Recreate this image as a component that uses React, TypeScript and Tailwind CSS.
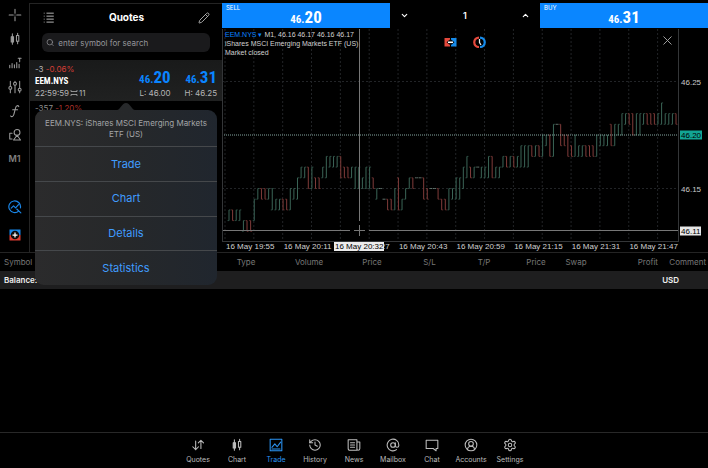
import { useState } from 'react';
import type { ReactNode } from 'react';
import { AtSign, ChevronDown, ChevronUp, CircleUserRound, History, Pencil, Search, Settings, X } from 'lucide-react';

// [low, high, direction] in cents above 46.00, one bar per minute
type Bar = [number, number, 'u' | 'd' | 'f'];

const BARS: Bar[] = [
  [12, 13, 'u'], [12, 13, 'd'], [12, 13, 'u'], [12, 13, 'u'], [11, 12, 'u'], [11, 12, 'd'], [11, 12, 'd'], [12, 14, 'u'],
  [14, 15, 'u'], [14, 15, 'd'], [14, 15, 'd'], [14, 15, 'u'], [13, 15, 'u'], [13, 14, 'u'], [13, 14, 'u'], [13, 14, 'd'],
  [13, 14, 'd'], [13, 15, 'u'], [14, 15, 'u'], [14, 16, 'u'], [16, 17, 'u'], [16, 17, 'u'], [15, 17, 'd'], [15, 17, 'u'],
  [15, 16, 'd'], [15, 16, 'd'], [16, 17, 'u'], [16, 18, 'u'], [17, 18, 'u'], [17, 18, 'u'], [17, 18, 'u'], [16, 18, 'd'],
  [16, 17, 'd'], [16, 17, 'd'], [16, 17, 'u'], [15, 17, 'u'], [15, 17, 'u'], [15, 16, 'u'], [15, 17, 'u'], [15, 17, 'u'],
  [15, 16, 'd'], [14, 15, 'u'], [15, 15, 'f'], [14, 14, 'f'], [13, 14, 'd'], [13, 14, 'd'], [13, 15, 'u'], [13, 16, 'd'],
  [13, 14, 'u'], [14, 15, 'u'], [15, 16, 'u'], [15, 16, 'd'], [16, 16, 'f'], [16, 16, 'f'], [14, 16, 'd'], [14, 15, 'd'],
  [15, 15, 'f'], [15, 15, 'f'], [14, 15, 'd'], [13, 14, 'd'], [13, 14, 'd'], [13, 15, 'u'], [14, 15, 'u'], [14, 16, 'u'],
  [14, 16, 'u'], [15, 17, 'u'], [16, 18, 'u'], [16, 17, 'd'], [16, 17, 'u'], [17, 17, 'f'], [16, 17, 'u'], [16, 17, 'u'],
  [16, 18, 'u'], [16, 18, 'd'], [16, 17, 'u'], [16, 17, 'u'], [17, 18, 'u'], [17, 18, 'd'], [17, 18, 'u'], [17, 18, 'd'],
  [17, 18, 'u'], [17, 19, 'u'], [17, 19, 'u'], [17, 19, 'u'], [18, 19, 'd'], [18, 19, 'u'], [18, 19, 'd'], [18, 20, 'u'],
  [19, 20, 'u'], [18, 20, 'd'], [18, 21, 'u'], [21, 21, 'f'], [19, 21, 'd'], [19, 20, 'd'], [18, 20, 'd'], [18, 19, 'd'],
  [18, 20, 'u'], [18, 19, 'u'], [18, 19, 'u'], [18, 19, 'd'], [18, 19, 'd'], [18, 19, 'd'], [18, 20, 'u'], [19, 20, 'u'],
  [19, 20, 'u'], [19, 20, 'u'], [19, 21, 'd'], [19, 21, 'u'], [20, 21, 'u'], [20, 22, 'u'], [21, 22, 'u'], [21, 22, 'd'],
  [20, 22, 'd'], [20, 22, 'u'], [20, 22, 'u'], [21, 22, 'u'], [21, 22, 'd'], [21, 22, 'd'], [21, 22, 'd'], [21, 22, 'u'],
  [21, 23, 'u'], [21, 22, 'u'], [21, 22, 'u'], [21, 22, 'u'], [21, 22, 'd'],
];

const PLOT_W = 457;
const PLOT_H = 213;
const priceY = (cents: number) => 52.5 + (25 - cents) * 10.7;
const barX = (i: number) => 7 + i * 3.605;

const GRID_X = Array.from({ length: 16 }, (_, i) => 3 + i * 28.84);
const TIMES = ['19:55', '20:11', '20:27', '20:43', '20:59', '21:15', '21:31', '21:47'];
const BAR_COLORS = { u: '#3b6557', d: '#803c3a', f: '#5e7069' };

const PriceChart = () => (
  <svg
    viewBox={`0 0 ${PLOT_W} ${PLOT_H}`}
    preserveAspectRatio="none"
    className="block h-[213px] w-full"
    role="img"
    aria-label="EEM.NYS one minute bars"
  >
    <g stroke="#222427" strokeDasharray="2 2">
      {GRID_X.map((x) => (
        <line key={x} x1={x} x2={x} y1="0" y2={PLOT_H} />
      ))}
      <line x1="0" x2={PLOT_W} y1={priceY(25)} y2={priceY(25)} />
      <line x1="0" x2={PLOT_W} y1={priceY(15)} y2={priceY(15)} />
    </g>
    {BARS.map(([low, high, dir], i) => {
      const x = barX(i);
      const top = priceY(high);
      const bottom = priceY(low);
      const open = dir === 'u' ? bottom : top;
      const close = dir === 'u' ? top : bottom;
      return (
        <g key={i} stroke={BAR_COLORS[dir]} fill="none">
          <path d={`M${x} ${top}V${bottom}`} />
          <path d={`M${x - 1.5} ${open}H${x}M${x} ${close}H${x + 1.5}`} strokeOpacity={dir === 'f' ? 1 : 0.7} />
        </g>
      );
    })}
    <line x1="0" x2={PLOT_W} y1={priceY(20)} y2={priceY(20)} stroke="#84a5a0" strokeDasharray="1 1" />
    {/* crosshair */}
    <path
      d="M137.5 0V192M137.5 196V207M0 201.5H128M132 201.5H143M147 201.5H457"
      stroke="#777"
      strokeWidth="1"
      fill="none"
    />
    <path d="M0.5 0V213M0 212.5H457M456.5 0V213" stroke="#343638" fill="none" />
  </svg>
);

const Glyph = ({ children, className = 'size-[14px]' }: { children: ReactNode; className?: string }) => (
  <svg
    viewBox="0 0 24 24"
    className={className}
    fill="none"
    stroke="currentColor"
    strokeWidth="1.8"
    strokeLinecap="round"
    strokeLinejoin="round"
    aria-hidden="true"
  >
    {children}
  </svg>
);

const CandlesIcon = () => (
  <Glyph>
    <path d="M7.500 3v18M16.500 2v4M16.500 16v4" />
    <path d="M5.500 8h4v9h-4z" fill="currentColor" />
    <path d="M14.500 6h4v10h-4z" />
  </Glyph>
);

const TOOLS: { label: string; icon: ReactNode }[] = [
  { label: 'Crosshair', icon: <Glyph><path d="M12 2v7M12 15v7M2 12h7M15 12h7M12 12h.01" /></Glyph> },
  { label: 'Chart type', icon: <CandlesIcon /> },
  {
    label: 'Volumes',
    icon: <Glyph><path d="M3 20v-4M7 20v-7M11 20v-5M15 20v-9M19 20v-6M17.500 4h5M20 4v6" /></Glyph>,
  },
  {
    label: 'Indicators',
    icon: (
      <Glyph>
        <path d="M4 2v9M4 16v6M12 2v2M12 9v13M20 2v12M20 19v3" />
        <circle cx="4" cy="13.500" r="2.500" />
        <circle cx="12" cy="6.500" r="2.500" />
        <circle cx="20" cy="16.500" r="2.500" />
      </Glyph>
    ),
  },
  {
    label: 'Functions',
    icon: <Glyph><path d="M18.500 4.500c-1-2.500-4.500-2.500-5.500 2L10 18c-.8 4-4 4.500-5.500 2.500M8 10h8.500" /></Glyph>,
  },
  {
    label: 'Objects',
    icon: (
      <Glyph>
        <circle cx="15.500" cy="7.500" r="5" />
        <path d="M7 9H3v10h4M15.500 12.500l6 8h-12z" />
      </Glyph>
    ),
  },
];

const NAV_ITEMS: { label: string; icon: ReactNode }[] = [
  { label: 'Quotes', icon: <Glyph><path d="M8 5v15M3 15l5 5 5-5M17 18V4M12.500 8.500L17 4l4.500 4.500" /></Glyph> },
  { label: 'Chart', icon: <CandlesIcon /> },
  {
    label: 'Trade',
    icon: (
      <Glyph>
        <path d="M2 2h20v20H2z" />
        <path d="M5 16l5-6 4 5 6-8M5 19h14" />
      </Glyph>
    ),
  },
  { label: 'History', icon: <History className="size-[14px]" strokeWidth={1.8} /> },
  {
    label: 'News',
    icon: <Glyph><path d="M2 3h15v18H5c-2 0-3-1-3-3zM17 7h5v11c0 2-1 3-3 3s-2-1-2-3M6 8h7M6 12h7M6 16h7" /></Glyph>,
  },
  { label: 'Mailbox', icon: <AtSign className="size-[14px]" strokeWidth={1.8} /> },
  { label: 'Chat', icon: <Glyph><path d="M2 4h20v14h-3v4l-5-4H2z" /></Glyph> },
  { label: 'Accounts', icon: <CircleUserRound className="size-[14px]" strokeWidth={1.8} /> },
  { label: 'Settings', icon: <Settings className="size-[14px]" strokeWidth={1.8} /> },
];

const ToolRail = () => (
  <aside className="flex w-[29px] shrink-0 flex-col items-center text-[#9c9c9c]">
    {TOOLS.map((tool) => (
      <button key={tool.label} type="button" aria-label={tool.label} className="flex h-6 w-full items-center justify-center">
        {tool.icon}
      </button>
    ))}
    <button type="button" className="h-6 w-full text-[9px] font-semibold text-[#808080]">M1</button>
    <button type="button" aria-label="Analysis" className="mt-[22px] flex h-7 w-full items-center justify-center text-[#1a86e8]">
      <Glyph>
        <path d="M18.600 18.600A10 10 0 1 1 21.300 13.500M15 15.500l7 6.500M5.500 14l4-4 3.500 3.500 5-5.500" strokeWidth="2" />
      </Glyph>
    </button>
    <button type="button" aria-label="New order" className="flex h-7 w-full items-center justify-center">
      <svg viewBox="0 0 24 24" className="size-[12px]" aria-hidden="true">
        <path d="M1 1h22v11H1z" fill="#1687e8" />
        <path d="M1 12h22v11H1z" fill="#dc3d32" />
        <circle cx="12" cy="12" r="8.500" fill="#0b0b0b" />
        <path d="M12 7v10M7 12h10" stroke="#fff" strokeWidth="2.500" />
      </svg>
    </button>
  </aside>
);

const Price = ({ small, big }: { small: string; big: string }) => (
  <span className="font-['Liberation_Sans_Narrow','Roboto_Condensed','Open_Sans_Condensed','Liberation_Sans',sans-serif] text-[11px] leading-[14px] font-bold">
    {small}
    <span className="text-[17px]">{big}</span>
  </span>
);

const QuoteMenu = () => (
  <div
    role="menu"
    className="absolute top-[106px] right-[5px] left-[5px] z-10 rounded-[9px] bg-linear-to-r from-[#2b2b2c] via-[#26282a] to-[#20262e] text-center"
  >
    <svg viewBox="0 0 18 8" className="absolute -top-2 left-1/2 h-2 w-[18px] -translate-x-1/2" aria-hidden="true">
      <path d="M0 8c3 0 5-7 9-7s6 7 9 7z" fill="#27292b" />
    </svg>
    <p className="px-2 pt-2 pb-[6px] text-[8px] leading-[11px] text-[#a2a4a6]">
      EEM.NYS: iShares MSCI Emerging Markets ETF (US)
    </p>
    <div className="flex h-[139px] flex-col">
      {['Trade', 'Chart', 'Details', 'Statistics'].map((item) => (
        <button
          key={item}
          type="button"
          role="menuitem"
          className="w-full flex-1 border-t border-[#45484b] text-[11px] text-[#409cff]"
        >
          {item}
        </button>
      ))}
    </div>
  </div>
);

const QuotesPanel = () => (
  <section className="relative flex w-[193px] shrink-0 flex-col border-t border-l border-[#242424]">
    <header className="flex h-[27px] items-center justify-between px-3">
      <button type="button" aria-label="Symbol list" className="text-[#b8b8b8]">
        <Glyph className="size-[13px]">
          <path d="M4 4h.01M4 9.500h.01M4 15h.01M4 20.500h.01M9 4h12M9 9.500h12M9 15h12M9 20.500h12" />
        </Glyph>
      </button>
      <h1 className="text-[10px] font-bold text-white">Quotes</h1>
      <button type="button" aria-label="Edit" className="text-[#b8b8b8]">
        <Pencil className="size-[12px]" strokeWidth={1.8} />
      </button>
    </header>
    <label className="mx-3 mt-[2px] flex h-[19px] items-center gap-1 rounded-md bg-[#1a1a1c] px-1 text-[#96969b]">
      <Search className="size-[9px]" aria-hidden="true" />
      <input
        type="search"
        aria-label="Search symbol"
        placeholder="enter symbol for search"
        className="h-full w-full min-w-0 bg-transparent text-[8px] outline-none placeholder:text-[#96969b]"
      />
    </label>
    <article className="mt-[8px] flex h-[41px] items-center justify-between bg-linear-to-b from-[#191a1a] to-[#202121] px-[5px] text-[8px] leading-[12px] text-[#b5b5b5]">
      <div>
        <p>
          -3 <span className="text-[#d33d35]">-0.06%</span>
        </p>
        <h2 className="font-['Liberation_Sans_Narrow','Roboto_Condensed','Open_Sans_Condensed','Liberation_Sans',sans-serif] text-[9px] font-bold text-white">
          EEM.NYS
        </h2>
        <p>
          22:59:59
          <svg viewBox="0 0 16 12" className="mx-px inline h-[6px] w-[8px] align-baseline" aria-hidden="true">
            <path d="M2 0v3M14 0v3M2 12V9M14 12V9M2 3h12M2 9h12" stroke="currentColor" strokeWidth="1.500" fill="none" />
          </svg>
          11
        </p>
      </div>
      <div className="flex gap-[14px] pt-2 text-right">
        <div>
          <p className="text-[#0a84ff]"><Price small="46." big="20" /></p>
          <p>L: 46.00</p>
        </div>
        <div>
          <p className="text-[#0a84ff]"><Price small="46." big="31" /></p>
          <p>H: 46.25</p>
        </div>
      </div>
    </article>
    <p className="h-[12px] overflow-hidden px-[5px] pt-px text-[8px] leading-[12px] text-[#8d8d8d]">
      -357 <span className="text-[#a8302a]">-1.20%</span>
    </p>
    <QuoteMenu />
  </section>
);

const OrderBar = () => {
  const [volume, setVolume] = useState('1');
  const step = (delta: number) => setVolume(String(Math.max(1, Number(volume) + delta)));

  return (
    <div className="flex h-[25px] text-white">
      <button type="button" className="relative flex flex-1 items-center justify-center bg-[#0a86ff] pt-[6px]">
        <span className="absolute top-px left-1 text-[6px] leading-[8px]">SELL</span>
        <Price small="46." big="20" />
      </button>
      <div className="flex w-[150px] items-center justify-between px-[10px]">
        <button type="button" aria-label="Decrease volume" onClick={() => step(-1)}>
          <ChevronDown className="size-[9px]" strokeWidth={3} />
        </button>
        <input
          aria-label="Volume"
          value={volume}
          onChange={(e) => setVolume(e.target.value)}
          className="w-10 bg-transparent text-center text-[9px] font-semibold outline-none"
        />
        <button type="button" aria-label="Increase volume" onClick={() => step(1)}>
          <ChevronUp className="size-[9px]" strokeWidth={3} />
        </button>
      </div>
      <button type="button" className="relative flex flex-1 items-center justify-center bg-[#0a86ff] pt-[6px]">
        <span className="absolute top-px left-1 text-[6px] leading-[8px]">BUY</span>
        <Price small="46." big="31" />
      </button>
    </div>
  );
};

const AXIS_LABELS = [
  { cents: 25, className: 'text-[#c9c9c9]' },
  { cents: 20, className: 'bg-[#12a594] text-black' },
  { cents: 15, className: 'text-[#c9c9c9]' },
  { cents: 11, className: 'bg-[#e6e6e6] text-black' },
];

const ChartPanel = () => (
  <section className="min-w-0 flex-1">
    <OrderBar />
    <div className="mt-px flex font-['Liberation_Sans',sans-serif]">
      <div className="relative min-w-0 flex-1">
        <PriceChart />
        <div className="absolute top-px left-[3px] text-[7px] leading-[9px] text-[#d2d2d2]">
          <p>
            <span className="text-[#0a84ff]">EEM.NYS ▾</span> M1, 46.16 46.17 46.16 46.17
          </p>
          <p>iShares MSCI Emerging Markets ETF (US)</p>
          <p>Market closed</p>
        </div>
        <div className="absolute top-[7px] right-[193px] flex gap-4">
          <svg viewBox="0 0 26 24" className="h-[12px] w-[13px]" aria-hidden="true">
            <path d="M1 4h11v17H1z" fill="#e5493d" />
            <path d="M14 4h11v17H14z" fill="#168bea" />
            <path d="M5 12.500l6-5h4l6 5-6 5h-4z" fill="#111" />
            <path d="M8 12.500h10" stroke="#fff" strokeWidth="3" />
          </svg>
          <svg viewBox="0 0 26 24" className="h-[12px] w-[13px]" aria-hidden="true">
            <path d="M12 3a9.500 9.500 0 1 0 0 19" fill="none" stroke="#e5493d" strokeWidth="4.500" />
            <path d="M14 3a9.500 9.500 0 1 1 0 19" fill="none" stroke="#168bea" strokeWidth="4.500" />
            <path d="M13 6v7l3 5" fill="none" stroke="#eee" strokeWidth="2.500" />
          </svg>
        </div>
        <button type="button" aria-label="Close chart" className="absolute top-1 right-1 text-[#a8a8a8]">
          <X className="size-[15px]" strokeWidth={1.5} />
        </button>
      </div>
      <div className="relative w-[29px] text-[8px] leading-[9px]">
        {AXIS_LABELS.map(({ cents, className }) => (
          <span key={cents} className={`absolute left-px -translate-y-1/2 px-px ${className}`} style={{ top: Math.round(priceY(cents)) }}>
            46.{cents}
          </span>
        ))}
      </div>
    </div>
    <div className="relative flex h-[10px] pl-1 font-['Liberation_Sans',sans-serif] text-[8px] leading-[10px] text-[#d0d0d0]">
      {TIMES.map((time) => (
        <span key={time} className="flex-1 whitespace-nowrap">16 May {time}</span>
      ))}
      <span className="w-[21px]" />
      <span className="absolute top-0 left-[112px] bg-[#ececec] px-px leading-[9px] text-black">16 May 20:32</span>
    </div>
  </section>
);

const TradeTable = () => (
  <table className="w-full table-fixed border-t border-[#242424] text-[8px] leading-[10px]">
    <colgroup>
      <col />
      <col className="w-[60px]" />
      <col className="w-[66px]" />
      <col className="w-[60px]" />
      <col className="w-[55px]" />
      <col className="w-[54px]" />
      <col className="w-[50px]" />
      <col className="w-[30px]" />
      <col className="w-[67px]" />
      <col className="w-[50px]" />
    </colgroup>
    <thead>
      <tr className="h-[18px] text-center text-[#777]">
        <th className="pl-1 text-left font-normal">Symbol</th>
        {['Type', 'Volume', 'Price', 'S/L', 'T/P', 'Price', 'Swap'].map((name, i) => (
          <th key={i} className="font-normal">{name}</th>
        ))}
        <th className="text-right font-normal">Profit</th>
        <th className="pr-[2px] text-right font-normal">Comment</th>
      </tr>
    </thead>
    <tbody>
      <tr className="h-[18px] bg-[#1e1e1f] font-semibold text-[#eee]">
        <td className="pl-1" colSpan={8}>Balance:</td>
        <td className="pr-[29px] text-right" colSpan={2}>USD</td>
      </tr>
    </tbody>
  </table>
);

const App = () => {
  const [activeTab, setActiveTab] = useState('Trade');

  return (
    <div className="flex min-h-screen flex-col bg-black pt-[3px] font-['Inter',sans-serif]">
      <main className="flex-1">
        <div className="flex">
          <ToolRail />
          <QuotesPanel />
          <ChartPanel />
        </div>
        <TradeTable />
      </main>
      <nav className="flex h-[36px] justify-center border-t border-[#282828]">
        {NAV_ITEMS.map(({ label, icon }) => (
          <button
            key={label}
            type="button"
            onClick={() => setActiveTab(label)}
            aria-current={activeTab === label ? 'page' : undefined}
            className={`flex w-[39px] flex-col items-center gap-[3px] pt-[5px] text-[7px] leading-[9px] ${
              activeTab === label ? 'text-[#2b95f5]' : 'text-[#bdbdbd]'
            }`}
          >
            {icon}
            {label}
          </button>
        ))}
      </nav>
    </div>
  );
};

export default App;
